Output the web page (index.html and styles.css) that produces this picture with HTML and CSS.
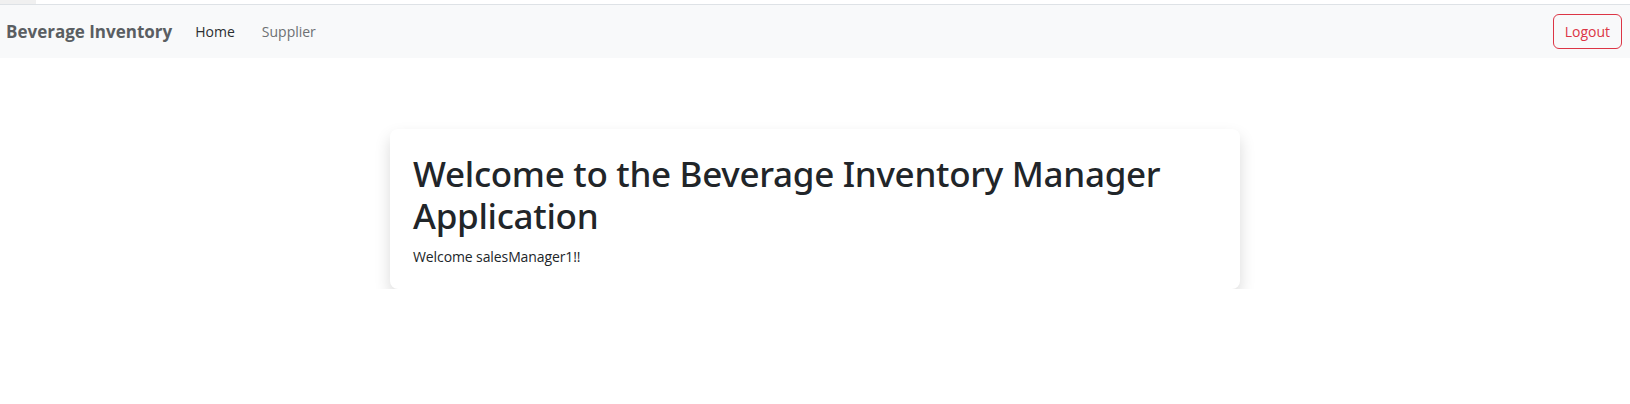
FILE: index.html
```html
<!DOCTYPE html>
<html lang="en">
<head>
<meta charset="utf-8">
<title>Beverage Inventory</title>
<link rel="stylesheet" href="styles.css">
</head>
<body>
<div class="topstrip"><span class="tab"></span></div>
<nav class="navbar">
  <div class="nav-left">
    <a class="brand" href="#">Beverage Inventory</a>
    <ul class="nav-links">
      <li><a class="nav-link active" href="#">Home</a></li>
      <li><a class="nav-link" href="#">Supplier</a></li>
    </ul>
  </div>
  <button class="btn-logout" type="button">Logout</button>
</nav>
<main class="main">
  <section class="card">
    <h1 class="title">Welcome to the Beverage Inventory Manager Application</h1>
    <p class="greeting">Welcome salesManager1!!</p>
  </section>
</main>
</body>
</html>
```

FILE: styles.css
```css
* { box-sizing: border-box; }
html, body { margin: 0; padding: 0; background: #fff; }
body {
  font-family: "Open Sans", "Noto Sans", "Liberation Sans", sans-serif;
  color: #212529;
  font-size: 16px;
}
.topstrip {
  height: 5px;
  background: #fff;
  border-bottom: 1px solid #dee2e6;
  display: flex;
}
.tab {
  width: 36px;
  height: 4px;
  background: #f0f0f0;
}
.navbar {
  height: 53px;
  background: #f8f9fa;
  display: flex;
  align-items: center;
  justify-content: space-between;
  padding: 0 8px 0 6px;
}
.nav-left {
  display: flex;
  align-items: center;
}
.brand {
  font-size: 17px;
  font-weight: 700;
  color: #5a5e62;
  text-decoration: none;
  margin-right: 15px;
}
.nav-links {
  list-style: none;
  margin: 0;
  padding: 0;
  display: flex;
  gap: 11px;
}
.nav-link {
  display: block;
  padding: 8px;
  font-size: 14px;
  color: #6d7073;
  text-decoration: none;
}
.nav-link.active { color: #2b2e31; }
.btn-logout {
  font-family: inherit;
  font-size: 14px;
  color: #dc3545;
  background: transparent;
  border: 1px solid #dc3545;
  border-radius: 6px;
  padding: 0 11px;
  height: 35px;
  line-height: 33px;
}
.main {
  padding-top: 71px;
  display: flex;
  justify-content: center;
}
.card {
  width: 850px;
  background: #fff;
  border-radius: 8px;
  box-shadow: 0 8px 16px rgba(0, 0, 0, 0.15);
  padding: 24px 23px 20px;
}
.title {
  margin: 0 0 8px;
  font-family: "Noto Sans", "Open Sans", sans-serif;
  font-size: 35px;
  line-height: 42px;
  font-weight: 500;
  letter-spacing: -0.3px;
  color: #212529;
}
.greeting {
  margin: 0;
  font-size: 14px;
  line-height: 24px;
  letter-spacing: -0.1px;
  color: #212529;
}
```
